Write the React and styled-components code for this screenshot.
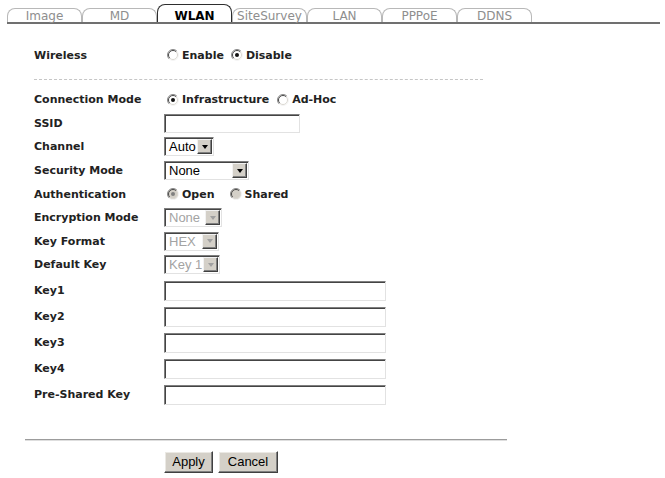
import React from "react";
import styled, { createGlobalStyle } from "styled-components";

const GlobalStyle = createGlobalStyle`
  html, body {
    margin: 0;
    padding: 0;
    background: #fff;
  }
  body {
    font-family: "DejaVu Sans", Verdana, sans-serif;
  }
`;

const TABS = ["Image", "MD", "WLAN", "SiteSurvey", "LAN", "PPPoE", "DDNS"];

const RadioMark = ({ checked, disabled }) => (
  <svg width="12" height="12" viewBox="0 0 12 12">
    <circle cx="6" cy="6" r="5.5" fill={disabled ? "#d4d0c8" : "#fff"} />
    <path d="M2.1 9.9 A5.5 5.5 0 0 1 9.9 2.1" stroke="#8a8a8a" fill="none" />
    <path d="M2.8 9.2 A4.5 4.5 0 0 1 9.2 2.8" stroke="#4a4a4a" fill="none" />
    <path d="M9.9 2.1 A5.5 5.5 0 0 1 2.1 9.9" stroke="#f4f4f4" fill="none" />
    <path d="M9.2 2.8 A4.5 4.5 0 0 1 2.8 9.2" stroke="#dcd9d3" fill="none" />
    {checked && (
      <circle cx="6" cy="6" r="2" fill={disabled ? "#808080" : "#111"} />
    )}
  </svg>
);

const Radio = ({ label, checked, disabled, gap }) => (
  <Option $gap={gap}>
    <RadioMark checked={checked} disabled={disabled} />
    <span>{label}</span>
  </Option>
);

const Select = ({ value, width, disabled }) => (
  <SelectBox $w={width} $disabled={disabled}>
    <SelectValue>{value}</SelectValue>
    <ArrowButton $disabled={disabled} />
  </SelectBox>
);

const App = () => {
  return (
    <>
      <GlobalStyle />
      <Page>
        <TabBar>
          {TABS.map((t) => (
            <Tab key={t} $active={t === "WLAN"}>
              {t}
            </Tab>
          ))}
        </TabBar>

        <Form>
          <Row $h={24}>
            <Label>Wireless</Label>
            <Radio label="Enable" gap={4} />
            <Radio label="Disable" checked />
          </Row>
          <Divider />

          <Row $h={23.6}>
            <Label>Connection Mode</Label>
            <Radio label="Infrastructure" checked gap={5} />
            <Radio label="Ad-Hoc" />
          </Row>
          <Row $h={23.6}>
            <Label>SSID</Label>
            <TextInput $w={136} $h={19} />
          </Row>
          <Row $h={23.6}>
            <Label>Channel</Label>
            <Select value="Auto" width={50} />
          </Row>
          <Row $h={23.6}>
            <Label>Security Mode</Label>
            <Select value="None" width={85} />
          </Row>
          <Row $h={23.6}>
            <Label>Authentication</Label>
            <Radio label="Open" checked disabled gap={12} />
            <Radio label="Shared" disabled />
          </Row>
          <Row $h={23.6}>
            <Label>Encryption Mode</Label>
            <Select value="None" width={58} disabled />
          </Row>
          <Row $h={23.6}>
            <Label>Key Format</Label>
            <Select value="HEX" width={55} disabled />
          </Row>
          <Row $h={23.6}>
            <Label>Default Key</Label>
            <Select value="Key 1" width={56} disabled />
          </Row>

          <KeyGroup>
            {["Key1", "Key2", "Key3", "Key4", "Pre-Shared Key"].map((k) => (
              <Row $h={26} key={k}>
                <Label>{k}</Label>
                <TextInput $w={222} $h={20} />
              </Row>
            ))}
          </KeyGroup>
        </Form>

        <Footer>
          <Rule />
          <ButtonRow>
            <Button type="button" $w={49}>
              Apply
            </Button>
            <Button type="button" $w={60}>
              Cancel
            </Button>
          </ButtonRow>
        </Footer>
      </Page>
    </>
  );
};

const Page = styled.div`
  width: 665px;
  height: 478px;
  overflow: hidden;
  padding-top: 4px;
  box-sizing: border-box;
`;

const TabBar = styled.nav`
  display: flex;
  align-items: flex-end;
  height: 18px;
  width: 653px;
  margin-left: 7px;
  border-bottom: 2px solid #707070;
`;

const Tab = styled.div`
  flex: 0 0 75px;
  box-sizing: border-box;
  height: ${(p) => (p.$active ? 18 : 14)}px;
  padding-top: ${(p) => (p.$active ? 4 : 1)}px;
  display: flex;
  align-items: center;
  justify-content: center;
  background: #fff;
  border: 1px solid ${(p) => (p.$active ? "#2e2e2e" : "#b8b8b8")};
  border-bottom: 0;
  border-radius: 8px 8px 0 0;
  font-size: 12px;
  line-height: 12px;
  font-weight: ${(p) => (p.$active ? "bold" : "normal")};
  color: ${(p) => (p.$active ? "#000" : "#8e8e8e")};
  white-space: nowrap;
`;

const Form = styled.form`
  margin: 19px 0 0;
  padding-left: 34px;
`;

const Row = styled.div`
  display: flex;
  align-items: center;
  height: ${(p) => p.$h}px;
`;

const Label = styled.div`
  flex: 0 0 130px;
  font-size: 11px;
  font-weight: bold;
  color: #222;
  white-space: nowrap;
`;

const Divider = styled.hr`
  width: 449px;
  margin: 12px 0 8px;
  border: 0;
  border-top: 1px dashed #c6c6c6;
`;

const Option = styled.label`
  display: inline-flex;
  align-items: center;
  gap: 3px;
  padding-left: 3px;
  margin-right: ${(p) => p.$gap || 0}px;
  font-size: 11px;
  font-weight: bold;
  color: #222;
`;

const TextInput = styled.input`
  box-sizing: border-box;
  width: ${(p) => p.$w}px;
  height: ${(p) => p.$h}px;
  margin: 0;
  padding: 1px 3px;
  background: #fff;
  border: 1px solid;
  border-color: #7f7f7f #e2e2e2 #e2e2e2 #7f7f7f;
  box-shadow: inset 1px 1px #444;
  font: 13px "Liberation Sans", Arial, sans-serif;
  outline: none;
`;

const SelectBox = styled.div`
  box-sizing: border-box;
  display: inline-flex;
  align-items: stretch;
  width: ${(p) => p.$w}px;
  height: 19px;
  padding: 1px;
  background: #fff;
  border: 1px solid;
  border-color: #7f7f7f #e2e2e2 #e2e2e2 #7f7f7f;
  box-shadow: inset 1px 1px #444;
  font: 13px "Liberation Sans", Arial, sans-serif;
  color: ${(p) => (p.$disabled ? "#a3a3a3" : "#000")};
`;

const SelectValue = styled.span`
  flex: 1;
  padding: 1px 0 0 3px;
  line-height: 14px;
  white-space: nowrap;
  overflow: hidden;
`;

const ArrowButton = styled.span`
  flex: 0 0 15px;
  box-sizing: border-box;
  display: flex;
  align-items: center;
  justify-content: center;
  background: #d4d0c8;
  border: 1px solid;
  border-color: #f2f2f2 #404040 #404040 #f2f2f2;
  box-shadow: inset -1px -1px #808080;

  &::after {
    content: "";
    border-left: 3.5px solid transparent;
    border-right: 3.5px solid transparent;
    border-top: 4px solid ${(p) => (p.$disabled ? "#a0a0a0" : "#000")};
  }
`;

const KeyGroup = styled.div`
  margin-top: 1px;
`;

const Footer = styled.div`
  margin-top: 31px;
  padding-left: 25px;
`;

const Rule = styled.div`
  width: 482px;
  border-top: 1px solid #9c9c9c;
  border-bottom: 1px solid #dedede;
`;

const ButtonRow = styled.div`
  display: flex;
  gap: 5px;
  margin-top: 10px;
  padding-left: 139px;
`;

const Button = styled.button`
  box-sizing: border-box;
  width: ${(p) => p.$w}px;
  height: 22px;
  margin: 0;
  padding: 0;
  background: #d4d0c8;
  border: 1px solid;
  border-color: #fff #404040 #404040 #fff;
  box-shadow: inset -1px -1px #808080, inset 1px 1px #ebe9e4;
  font: 13px "Liberation Sans", Arial, sans-serif;
  color: #000;
`;

export default App;
